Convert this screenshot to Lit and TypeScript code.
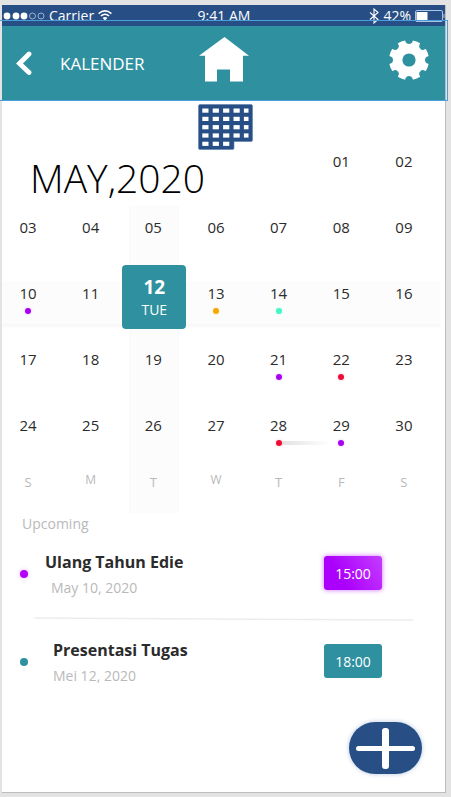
import { LitElement, html, css, svg, nothing } from "lit";
import { customElement, state } from "lit/decorators.js";
import { classMap } from "lit/directives/class-map.js";

interface Day {
  n: string;
  dot?: string;
  span?: boolean;
}

const WEEKS: Day[][] = [
  [{ n: "03" }, { n: "04" }, { n: "05" }, { n: "06" }, { n: "07" }, { n: "08" }, { n: "09" }],
  [
    { n: "10", dot: "purple" },
    { n: "11" },
    { n: "12" },
    { n: "13", dot: "amber" },
    { n: "14", dot: "mint" },
    { n: "15" },
    { n: "16" },
  ],
  [
    { n: "17" },
    { n: "18" },
    { n: "19" },
    { n: "20" },
    { n: "21", dot: "purple" },
    { n: "22", dot: "red" },
    { n: "23" },
  ],
  [
    { n: "24" },
    { n: "25" },
    { n: "26" },
    { n: "27" },
    { n: "28", dot: "red", span: true },
    { n: "29", dot: "purple" },
    { n: "30" },
  ],
];

const WEEKDAYS = ["S", "M", "T", "W", "T", "F", "S"];

const EVENTS = [
  { title: "Ulang Tahun Edie", date: "May 10, 2020", time: "15:00", kind: "purple" },
  { title: "Presentasi Tugas", date: "Mei 12, 2020", time: "18:00", kind: "teal" },
];

const GEAR_NOTCHES = [0, 45, 90, 135, 180, 225, 270, 315];

@customElement("app-status-bar")
export class AppStatusBar extends LitElement {
  static styles = css`
    :host {
      display: grid;
      grid-template-columns: 1fr auto 1fr;
      align-items: center;
      height: 21px;
      padding-left: 1px;
      background: #284f85;
      color: #fff;
      font-size: 14px;
      line-height: 21px;
      white-space: nowrap;
    }
    .left,
    .right {
      display: flex;
      align-items: center;
      gap: 4px;
    }
    .right {
      justify-content: flex-end;
    }
    svg {
      display: block;
    }
  `;

  render() {
    return html`
      <div class="left">
        <svg width="42" height="8" viewBox="0 0 42 8">
          ${[4, 13, 21].map((x) => svg`<circle cx=${x} cy="4" r="3.4" fill="#fff" />`)}
          ${[29.5, 38].map(
            (x) => svg`<circle cx=${x} cy="4" r="3" fill="none" stroke="#b9cbe2" stroke-width=".8" />`
          )}
        </svg>
        <span>Carrier</span>
        <svg width="14" height="11" viewBox="0 0 14 11" fill="none" stroke="#fff" stroke-width="1.5">
          <path d="M.6 3.6Q7-1.8 13.4 3.6M2.9 6Q7 2.4 11.1 6" />
          <path d="M7 10.5 4.6 8Q7 6.2 9.4 8Z" fill="#fff" stroke="none" />
        </svg>
      </div>
      <span>9:41 AM</span>
      <div class="right">
        <svg width="10" height="16" viewBox="0 0 10 16" fill="none" stroke="#fff" stroke-width="1.1">
          <path d="M1 4.5 9 11.5 5 15V1l4 3.5L1 11.5" />
        </svg>
        <span>42%</span>
        <svg width="30" height="14" viewBox="0 0 30 14">
          <rect x=".5" y="1.5" width="27" height="11" rx="1.5" fill="none" stroke="#a9c4e6" />
          <rect x="1.5" y="3" width="11" height="8" fill="#fff" />
          <path d="M29 5v4" stroke="#a9c4e6" />
        </svg>
      </div>
    `;
  }
}

@customElement("app-calendar")
export class AppCalendar extends LitElement {
  @state() private selected = "12";

  static styles = css`
    :host {
      display: block;
      color: #2b2b2b;
      font-size: 15px;
      line-height: 22px;
    }
    table,
    tbody {
      display: block;
    }
    tr {
      display: grid;
      grid-template-columns: repeat(7, 20px);
      justify-content: space-between;
      height: 66px;
      padding: 0 31px 0 16px;
    }
    td,
    th {
      display: block;
      position: relative;
      padding: 17px 0 0;
      text-align: center;
      font-weight: 400;
      white-space: nowrap;
    }
    .first {
      height: 49px;
    }
    .first td,
    .first th {
      padding-top: 0;
    }
    .first .month {
      grid-column: span 5;
      padding: 4px 0 0 12px;
      color: #000;
      text-align: left;
      font-size: 39px;
      font-weight: 300;
      line-height: 48px;
    }
    .current {
      background: linear-gradient(#fcfcfc, #fcfcfc) 0 16px / 99% 43px no-repeat,
        linear-gradient(#f6f6f6, #fefefe) 0 59px / 99% 4px no-repeat;
    }
    .lane::before {
      content: "";
      position: absolute;
      z-index: 0;
      inset: 0 -16px 0 -14px;
      background: #fcfcfc;
      border: solid #fafafa;
      border-width: 0 1px;
    }
    .top.lane::before {
      top: 7px;
    }
    .num {
      position: relative;
      display: block;
      width: 20px;
      margin: 0;
      padding: 0;
      border: 0;
      background: none;
      color: inherit;
      font: inherit;
      text-align: center;
    }
    .on {
      padding: 0;
    }
    .tile {
      position: relative;
      width: 64px;
      height: 64px;
      margin: 0 -21px;
      padding: 10px 0 8px;
      border: 0;
      border-radius: 4px;
      background: #2f909f;
      color: #fff;
      font: inherit;
    }
    .tile b {
      display: block;
      font-size: 19px;
      line-height: 24px;
    }
    .tile span {
      display: block;
      font-size: 14px;
    }
    .dot {
      position: relative;
      display: block;
      width: 6px;
      height: 6px;
      margin: 4px auto 0;
      border-radius: 50%;
    }
    .purple {
      background: #a800f0;
      box-shadow: 0 0 3px #e9c4fb;
    }
    .amber {
      background: #f4a900;
      box-shadow: 0 0 3px #fbe6b8;
    }
    .mint {
      background: #45f5c6;
      box-shadow: 0 0 3px #c4fbee;
    }
    .red {
      background: #f00b36;
      box-shadow: 0 0 3px #fbc4cf;
    }
    .range {
      position: absolute;
      top: 44px;
      left: 12px;
      width: 50px;
      height: 4px;
      background: linear-gradient(90deg, #e2e2e2, #fff);
    }
    .days {
      height: 50px;
    }
    .days th {
      padding-top: 10px;
      color: #b9b9b9;
      font-size: 13px;
      line-height: 18px;
    }
    .days th span {
      position: relative;
    }
    .days .high {
      padding-top: 8px;
      font-size: 12px;
    }
  `;

  private day(d: Day, col: number, row: number) {
    const on = d.n === this.selected;
    const cls = { lane: col === 2, top: row === 0, on };
    return html`<td class=${classMap(cls)}>
      ${on
        ? html`<button class="tile"><b>${d.n}</b><span>TUE</span></button>`
        : html`<button class="num">${d.n}</button>`}
      ${d.span ? html`<span class="range"></span>` : nothing}
      ${d.dot ? html`<span class="dot ${d.dot}"></span>` : nothing}
    </td>`;
  }

  render() {
    return html`<table>
      <tbody>
        <tr class="first">
          <th class="month" colspan="5">MAY,2020</th>
          <td><button class="num">01</button></td>
          <td><button class="num">02</button></td>
        </tr>
        ${WEEKS.map(
          (week, row) => html`<tr class=${row === 1 ? "current" : ""}>
            ${week.map((d, col) => this.day(d, col, row))}
          </tr>`
        )}
        <tr class="days">
          ${WEEKDAYS.map(
            (d, i) =>
              html`<th class=${classMap({ lane: i === 2, high: d === "M" || d === "W" })}><span>${d}</span></th>`
          )}
        </tr>
      </tbody>
    </table>`;
  }
}

@customElement("app-root")
export class AppRoot extends LitElement {
  static styles = css`
    :host {
      display: flex;
      box-sizing: border-box;
      min-height: 100vh;
      padding: 5px 5px 4px 2px;
      background: #e3e3e3;
      font-family: "Open Sans", "Noto Sans", sans-serif;
    }
    .screen {
      position: relative;
      display: flex;
      flex: 1;
      flex-direction: column;
      min-width: 0;
      border: solid #bdbdbd;
      border-width: 0 1px 1px 0;
      background: #fff;
    }
    .bar {
      display: grid;
      grid-template-columns: 1fr auto 1fr;
      align-items: center;
      height: 74px;
      background: #2f909f;
      color: #fff;
    }
    .start {
      display: flex;
      align-items: center;
      gap: 28px;
      padding: 2px 0 0 14px;
    }
    .end {
      display: flex;
      justify-content: flex-end;
      padding-right: 16px;
    }
    .icon {
      display: block;
      padding: 0;
      border: 0;
      background: none;
    }
    .icon svg,
    .fab svg,
    .rule {
      display: block;
    }
    h1 {
      margin: 0;
      font-size: 17px;
      font-weight: 400;
      line-height: 22px;
    }
    .home {
      padding-bottom: 7px;
    }
    .gear {
      padding-bottom: 6px;
    }
    .frame {
      position: absolute;
      top: 15px;
      right: -3px;
      left: -2px;
      height: 79px;
      border: solid #4a9fdb;
      border-width: 1px 1px 1px 0;
      pointer-events: none;
    }
    .grid-icon {
      align-self: center;
      height: 50px;
      padding: 4px 0 0 3px;
    }
    h2 {
      margin: 0;
      padding-left: 20px;
      color: #b9b9b9;
      font-size: 14px;
      font-weight: 400;
      line-height: 22px;
    }
    .events {
      display: flex;
      flex-direction: column;
      gap: 17px;
      margin: 0;
      padding: 14px 32px 0 18px;
      list-style: none;
    }
    .event {
      display: grid;
      grid-template-columns: 8px 1fr 58px;
      padding-right: 31px;
    }
    .mark {
      width: 8px;
      height: 8px;
      margin-top: 21px;
      border-radius: 50%;
    }
    .name,
    .date {
      display: block;
      padding-left: 23px;
      line-height: 26px;
    }
    .name {
      padding-left: 17px;
      color: #2b2b2b;
      font-size: 16px;
      font-weight: 700;
    }
    .date {
      color: #b9b9b9;
      font-size: 14px;
    }
    .teal .name,
    .teal .date {
      padding-left: 25px;
    }
    .time {
      height: 34px;
      margin-top: 7px;
      padding: 0;
      border: 0;
      border-radius: 3px;
      background: #2f909f;
      color: #fff;
      font: inherit;
      font-size: 14px;
    }
    .teal .mark {
      background: #2f909f;
    }
    .purple .mark {
      background: #b400fa;
      box-shadow: 0 0 4px #e9b4fb;
    }
    .purple .time {
      background: linear-gradient(60deg, #ab00fb 30%, #c43cff);
      box-shadow: 0 0 5px #cf6bff;
    }
    .rule {
      width: 378px;
      max-width: 100%;
      height: 2px;
      margin-left: 15px;
      overflow: visible;
    }
    .foot {
      display: flex;
      justify-content: flex-end;
      margin-top: auto;
      padding: 24px 23px 18px;
    }
    .fab {
      width: 73px;
      height: 52px;
      padding: 0;
      border: 0;
      border-radius: 26px;
      background: #284f85;
      box-shadow: 0 0 5px #b7c8dd;
    }
  `;

  render() {
    return html`
      <div class="screen">
        <app-status-bar></app-status-bar>
        <header class="bar">
          <div class="start">
            <button class="icon" aria-label="Back">
              <svg width="16" height="26" viewBox="0 0 16 26">
                <path d="M13 3 3.500 12.500 13 21.500" fill="none" stroke="#fff" stroke-width="4.8" stroke-linecap="round" stroke-linejoin="miter" />
              </svg>
            </button>
            <h1>KALENDER</h1>
          </div>
          <button class="icon home" aria-label="Home">
            <svg width="50" height="45" viewBox="0 0 50 45" fill="#fff">
              <path d="M25.500 0 50 18.800H44V44.500H31V32.500H18V44.500H6V18.800H0Z" />
            </svg>
          </button>
          <div class="end">
            <button class="icon gear" aria-label="Settings">
              <svg width="40" height="40" viewBox="0 0 40 40">
                <mask id="cut">
                  <rect width="40" height="40" fill="#fff" />
                  <circle cx="20" cy="20" r="6.600" fill="#000" />
                  ${GEAR_NOTCHES.map(
                    (a) => svg`<path d="M15.600-1 16.800 2.300Q17.600 4 20 4T23.200 2.300L24.400-1Z" fill="#000" transform="rotate(${a} 20 20)" />`
                  )}
                </mask>
                <circle cx="20" cy="20" r="20" fill="#fff" mask="url(#cut)" />
              </svg>
            </button>
          </div>
        </header>

        <button class="icon grid-icon" aria-label="Month view">
          <svg width="55" height="46" viewBox="0 0 55 46">
            <path d="M2 .5H53a1.500 1.500 0 0 1 1.500 1.500V36a1.500 1.500 0 0 1-1.500 1.500H36V44a1.500 1.500 0 0 1-1.500 1.500H2A1.500 1.500 0 0 1 .5 44V2A1.500 1.500 0 0 1 2 .5Z" fill="#284f85" stroke="#5b7fb0" stroke-width=".6" />
            ${[0, 1, 2, 3, 4].map((r) =>
              [0, 1, 2, 3, 4]
                .filter((c) => r < 4 || c < 3)
                .map(
                  (c) => svg`<rect x=${4.3 + c * 10.4} y=${4.5 + r * 8.3} width=${c === 4 ? 4.6 : 6.2} height="4.200" fill="#fff" />`
                )
            )}
          </svg>
        </button>

        <app-calendar></app-calendar>

        <h2>Upcoming</h2>
        <ul class="events">
          ${EVENTS.map(
            (e, i) => html`
              ${i
                ? html`<li role="separator">
                    <svg class="rule" viewBox="0 0 378 2" preserveAspectRatio="none">
                      <path d="M0 0 378 2" stroke="#ececec" stroke-width="1.500" />
                    </svg>
                  </li>`
                : nothing}
              <li class="event ${e.kind}">
                <span class="mark"></span>
                <div>
                  <span class="name">${e.title}</span>
                  <span class="date">${e.date}</span>
                </div>
                <button class="time">${e.time}</button>
              </li>
            `
          )}
        </ul>

        <footer class="foot">
          <button class="fab" aria-label="Add event">
            <svg width="73" height="52" viewBox="0 0 73 52" fill="#fff">
              <rect x="7" y="24" width="59" height="5" rx="2.500" />
              <rect x="33" y="6" width="7" height="41" rx="3" />
            </svg>
          </button>
        </footer>
        <div class="frame"></div>
      </div>
    `;
  }
}
